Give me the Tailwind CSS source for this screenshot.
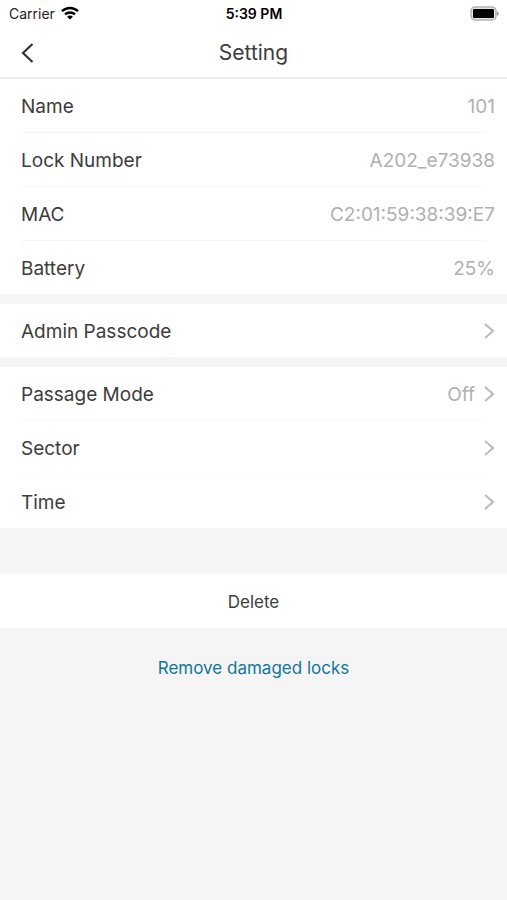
<!DOCTYPE html>
<html lang="en">
<head>
<meta charset="utf-8">
<meta name="viewport" content="width=device-width, initial-scale=1">
<title>Setting</title>
<script src="https://cdn.jsdelivr.net/npm/@tailwindcss/browser@4"></script>
</head>
<body class="min-h-screen bg-[#f5f5f5] font-['Inter','Liberation_Sans',sans-serif] text-[19px] text-[#3c3c3c]">
<div class="bg-white border-b-2 border-[#ebebeb]">
  <div class="grid grid-cols-3 items-center h-[26px] pl-[9px] pr-2 text-black">
    <div class="flex items-center gap-[6px] text-[14px] text-[#222]">
      <span>Carrier</span>
      <svg class="w-[18px] h-[14px]" viewBox="0 0 18 14" fill="none" stroke="#000" stroke-width="2.5" aria-hidden="true">
        <path d="M1 5.2C5.500 .9 12.500 .9 17 5.2"/>
        <path d="M4 8.4C6.8 5.7 11.2 5.7 14 8.4"/>
        <path d="M9 13.600 6.1 10.700C7.6 9.200 10.400 9.200 11.900 10.700Z" fill="#000" stroke="none"/>
      </svg>
    </div>
    <div class="text-center text-[14px] font-semibold">5:39 PM</div>
    <svg class="justify-self-end w-[30px] h-[15px]" viewBox="0 0 30 15" aria-hidden="true">
      <rect x="2" y="1" width="25" height="13" rx="4" fill="#e4e4e4" stroke="#b4b4b4" stroke-width="1.5"/>
      <rect x="4" y="3" width="21" height="9" rx="1" fill="#000"/>
      <path d="M28 5.2C30.4 6 30.4 9 28 9.8Z" fill="#999"/>
    </svg>
  </div>
  <header class="grid grid-cols-3 items-center h-[51px] pl-5 pr-5 pt-[2px]">
    <button type="button" aria-label="Back" class="justify-self-start">
      <svg class="w-4 h-5" viewBox="0 0 16 20" fill="none" stroke="#333" stroke-width="2.2" aria-hidden="true"><path d="M12.500 1 3 10l9.500 9"/></svg>
    </button>
    <h1 class="text-center text-[21px]">Setting</h1>
  </header>
</div>
<main>
  <dl class="bg-white">
    <div class="flex items-center justify-between h-[53px] pl-[21px] pr-3 pt-[3px]"><dt>Name</dt><dd class="text-[#b0b0b0]">101</dd></div>
    <div class="h-px mx-[21px] bg-[#f5f5f5]"></div>
    <div class="flex items-center justify-between h-[53px] pl-[21px] pr-3 pt-[3px]"><dt>Lock Number</dt><dd class="text-[#b0b0b0]">A202_e73938</dd></div>
    <div class="h-px mx-[21px] bg-[#f9f9f9]"></div>
    <div class="flex items-center justify-between h-[53px] pl-[21px] pr-3 pt-[3px]"><dt>MAC</dt><dd class="text-[#b0b0b0]">C2:01:59:38:39:E7</dd></div>
    <div class="h-px mx-[21px] bg-[#f5f5f5]"></div>
    <div class="flex items-center justify-between h-[53px] pl-[21px] pr-3 pt-[3px]"><dt>Battery</dt><dd class="text-[#b0b0b0]">25%</dd></div>
  </dl>
  <section class="mt-[10px] bg-white">
    <button type="button" class="flex items-center justify-between w-full h-[53px] pl-[21px] pr-3">
      <span class="pt-[3px]">Admin Passcode</span>
      <svg class="w-3 h-4" viewBox="0 0 12 16" fill="none" stroke="#bdbdbd" stroke-width="2.2" aria-hidden="true"><path d="M2 1l8 7-8 7"/></svg>
    </button>
  </section>
  <section class="mt-[10px] bg-white">
    <button type="button" class="flex items-center justify-between w-full h-[53px] pl-[21px] pr-3">
      <span class="pt-[3px]">Passage Mode</span>
      <span class="flex items-center gap-2 text-[#b0b0b0]"><span class="pt-[3px]">Off</span>
        <svg class="w-3 h-4" viewBox="0 0 12 16" fill="none" stroke="#bdbdbd" stroke-width="2.2" aria-hidden="true"><path d="M2 1l8 7-8 7"/></svg>
      </span>
    </button>
    <div class="h-px mx-[21px] bg-[#f9f9f9]"></div>
    <button type="button" class="flex items-center justify-between w-full h-[53px] pl-[21px] pr-3">
      <span class="pt-[3px]">Sector</span>
      <svg class="w-3 h-4" viewBox="0 0 12 16" fill="none" stroke="#bdbdbd" stroke-width="2.2" aria-hidden="true"><path d="M2 1l8 7-8 7"/></svg>
    </button>
    <div class="h-px mx-[21px] bg-[#fbfbfb]"></div>
    <button type="button" class="flex items-center justify-between w-full h-[53px] pl-[21px] pr-3">
      <span class="pt-[3px]">Time</span>
      <svg class="w-3 h-4" viewBox="0 0 12 16" fill="none" stroke="#bdbdbd" stroke-width="2.2" aria-hidden="true"><path d="M2 1l8 7-8 7"/></svg>
    </button>
  </section>
  <button type="button" class="block w-full h-[54px] mt-[46px] pt-[3px] bg-white text-center text-[17px]">Delete</button>
  <div class="flex justify-center mt-7">
    <a href="#" class="text-[17px] leading-6 text-[#14759b]">Remove damaged locks</a>
  </div>
</main>
</body>
</html>
